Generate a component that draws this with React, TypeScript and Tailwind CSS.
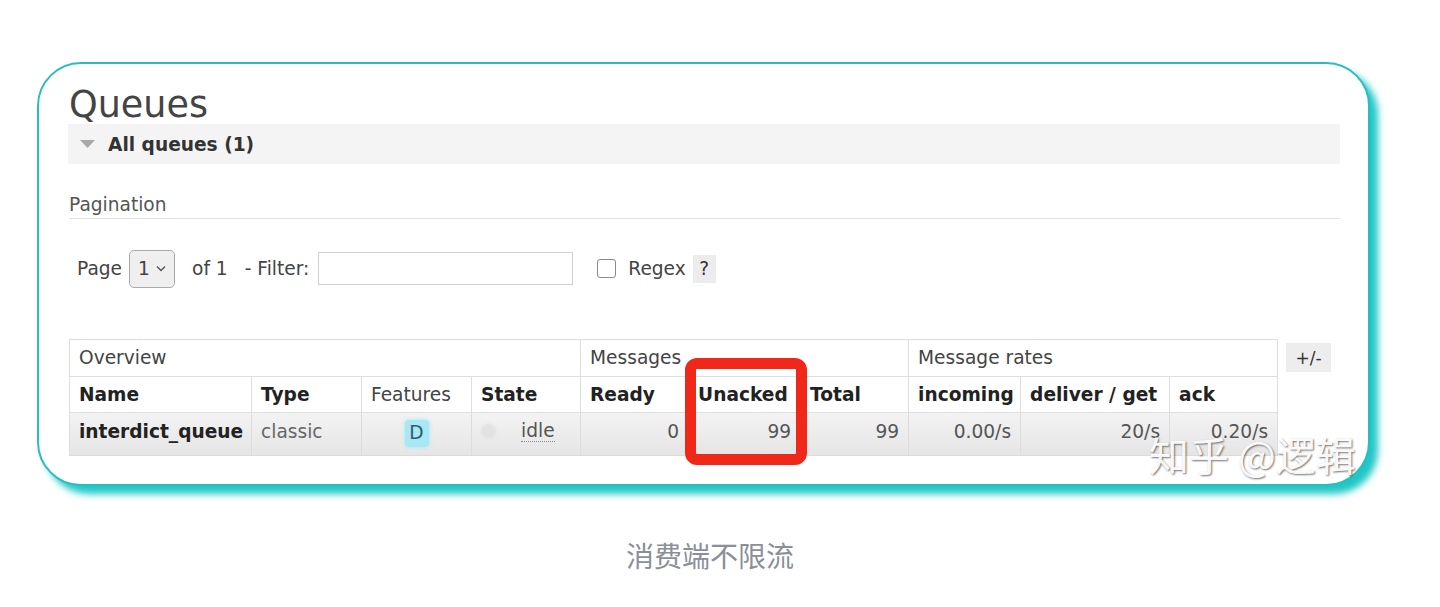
import * as React from "react";

// Columns of the queues table, widths taken from the screenshot.
const cols = [182, 110, 110, 109, 108, 112, 108, 112, 149, 108];

function Th({ children, bold = true }: { children: React.ReactNode; bold?: boolean }) {
  return (
    <th
      className={`border border-[#dedede] bg-white px-[9px] text-left align-middle ${
        bold ? "font-bold text-[#222]" : "font-normal text-[#444]"
      }`}
    >
      {children}
    </th>
  );
}

function Num({ children }: { children: React.ReactNode }) {
  return <td className="border-x border-[#dcdcdc] px-[9px] pb-[5px] text-right text-[#555]">{children}</td>;
}

export default function App() {
  return (
    <div className="relative h-[607px] w-[1440px] overflow-hidden bg-white pl-[37px] pt-[62px] font-['DejaVu_Sans',Verdana,sans-serif] text-[18.6px] leading-[22px]">
      {/* card */}
      <div className="relative w-[1333px] rounded-[44px] border-2 border-[#2cbcbc] bg-white pb-[28px] pl-[30px] pr-[28px] pt-[20px] shadow-[8px_8px_7px_rgba(20,196,196,0.95)]">
        <h1 className="h-[40px] text-[36.5px] font-normal leading-[42px] text-[#444]">Queues</h1>

        <div className="ml-[-1px] flex h-[40px] items-center bg-[#f4f4f4] pl-[12px]">
          <svg width="15" height="9" viewBox="0 0 15 9">
            <path d="M0 0 H15 L7.5 8 Z" fill="#a9a9a9" />
          </svg>
          <span className="ml-[13px] mt-[2px] font-bold text-[#333]">All queues (1)</span>
        </div>

        <div className="mt-[30px] border-b border-[#e2e2e2] pb-[2px] text-[#555]">Pagination</div>

        <div className="mt-[30px] flex h-[38px] items-center pl-[8px] pt-[1px] text-[#444]">
          <span>Page</span>
          <div className="ml-[7px] flex h-[38px] w-[46px] items-center justify-center gap-[6px] rounded-[5px] border border-[#aaa] bg-[#efefef]">
            <span>1</span>
            <svg width="10" height="7" viewBox="0 0 10 7">
              <path d="M1 1.5 L5 5.5 L9 1.5" fill="none" stroke="#555" strokeWidth="1.4" />
            </svg>
          </div>
          <span className="ml-[17px]">of 1</span>
          <span className="ml-[17px]">- Filter:</span>
          <div className="ml-[9px] h-[33px] w-[255px] border border-[#cfcfcf] bg-white" />
          <div className="ml-[24px] h-[19px] w-[19px] rounded-[3px] border border-[#8a8a8a] bg-white" />
          <span className="ml-[12px]">Regex</span>
          <span className="ml-[7px] flex h-[28px] w-[23px] items-center justify-center bg-[#ececec] text-[#333]">?</span>
        </div>

        <div className="mt-[52px] flex items-start gap-[8px]">
          <div className="relative">
            <table className="table-fixed border-collapse border border-[#dcdcdc]" style={{ width: 1208 }}>
              <colgroup>
                {cols.map((w, i) => (
                  <col key={i} style={{ width: w }} />
                ))}
              </colgroup>
              <thead>
                <tr className="h-[37px]">
                  <th colSpan={4} className="border border-[#dedede] bg-white px-[9px] text-left font-normal text-[#444]">
                    Overview
                  </th>
                  <th colSpan={3} className="border border-[#dedede] bg-white px-[9px] text-left font-normal text-[#444]">
                    Messages
                  </th>
                  <th colSpan={3} className="border border-[#dedede] bg-white px-[9px] text-left font-normal text-[#444]">
                    Message rates
                  </th>
                </tr>
                <tr className="h-[36px]">
                  <Th>Name</Th>
                  <Th>Type</Th>
                  <Th bold={false}>Features</Th>
                  <Th>State</Th>
                  <Th>Ready</Th>
                  <Th>Unacked</Th>
                  <Th>Total</Th>
                  <Th>incoming</Th>
                  <Th>deliver / get</Th>
                  <Th>ack</Th>
                </tr>
              </thead>
              <tbody>
                <tr className="h-[43px] bg-gradient-to-b from-[#f3f3f3] to-[#e5e5e5]">
                  <td className="border-x border-[#dcdcdc] px-[9px] pb-[5px] font-bold text-[#222]">interdict_queue</td>
                  <td className="border-x border-[#dcdcdc] px-[9px] pb-[5px] text-[#666]">classic</td>
                  <td className="border-x border-[#dcdcdc] px-[9px] pb-[2px] text-center">
                    <span className="inline-flex h-[27px] w-[24px] items-center justify-center rounded-[4px] bg-[#a8e7f4] text-[#2e5c6a] shadow-[0_0_4px_#9fe6f5]">
                      D
                    </span>
                  </td>
                  <td className="border-x border-[#dcdcdc] px-[9px] pb-[5px]">
                    <div className="flex items-center">
                      <span className="h-[15px] w-[15px] rounded-full bg-[#e2e2e2] blur-[1px]" />
                      <span className="ml-[25px] border-b border-dotted border-[#888] leading-[20px] text-[#555]">idle</span>
                    </div>
                  </td>
                  <Num>0</Num>
                  <Num>99</Num>
                  <Num>99</Num>
                  <Num>0.00/s</Num>
                  <Num>20/s</Num>
                  <Num>0.20/s</Num>
                </tr>
              </tbody>
            </table>

            {/* red highlight drawn over the Unacked column */}
            <div className="pointer-events-none absolute left-[616px] top-[19px] h-[107px] w-[122px] rounded-[12px] border-[11px] border-[#f0281a]" />
          </div>

          <div className="mt-[4px] flex h-[29px] w-[45px] items-center justify-center bg-[#ededed] text-[17px] text-[#333]">
            +/-
          </div>
        </div>

        {/* watermark */}
        <div className="pointer-events-none absolute left-[1110px] top-[366px] font-['Noto_Sans_CJK_SC',sans-serif] text-[40px] leading-[48px] text-white/95 [text-shadow:1px_1px_2px_rgba(0,0,0,0.55)]">
          知乎 @逻辑
        </div>
      </div>

      <p className="mt-[49px] pr-[57px] text-center font-['Noto_Sans_CJK_SC',sans-serif] text-[28px] leading-[40px] text-[#8a8f98]">
        消费端不限流
      </p>
    </div>
  );
}
